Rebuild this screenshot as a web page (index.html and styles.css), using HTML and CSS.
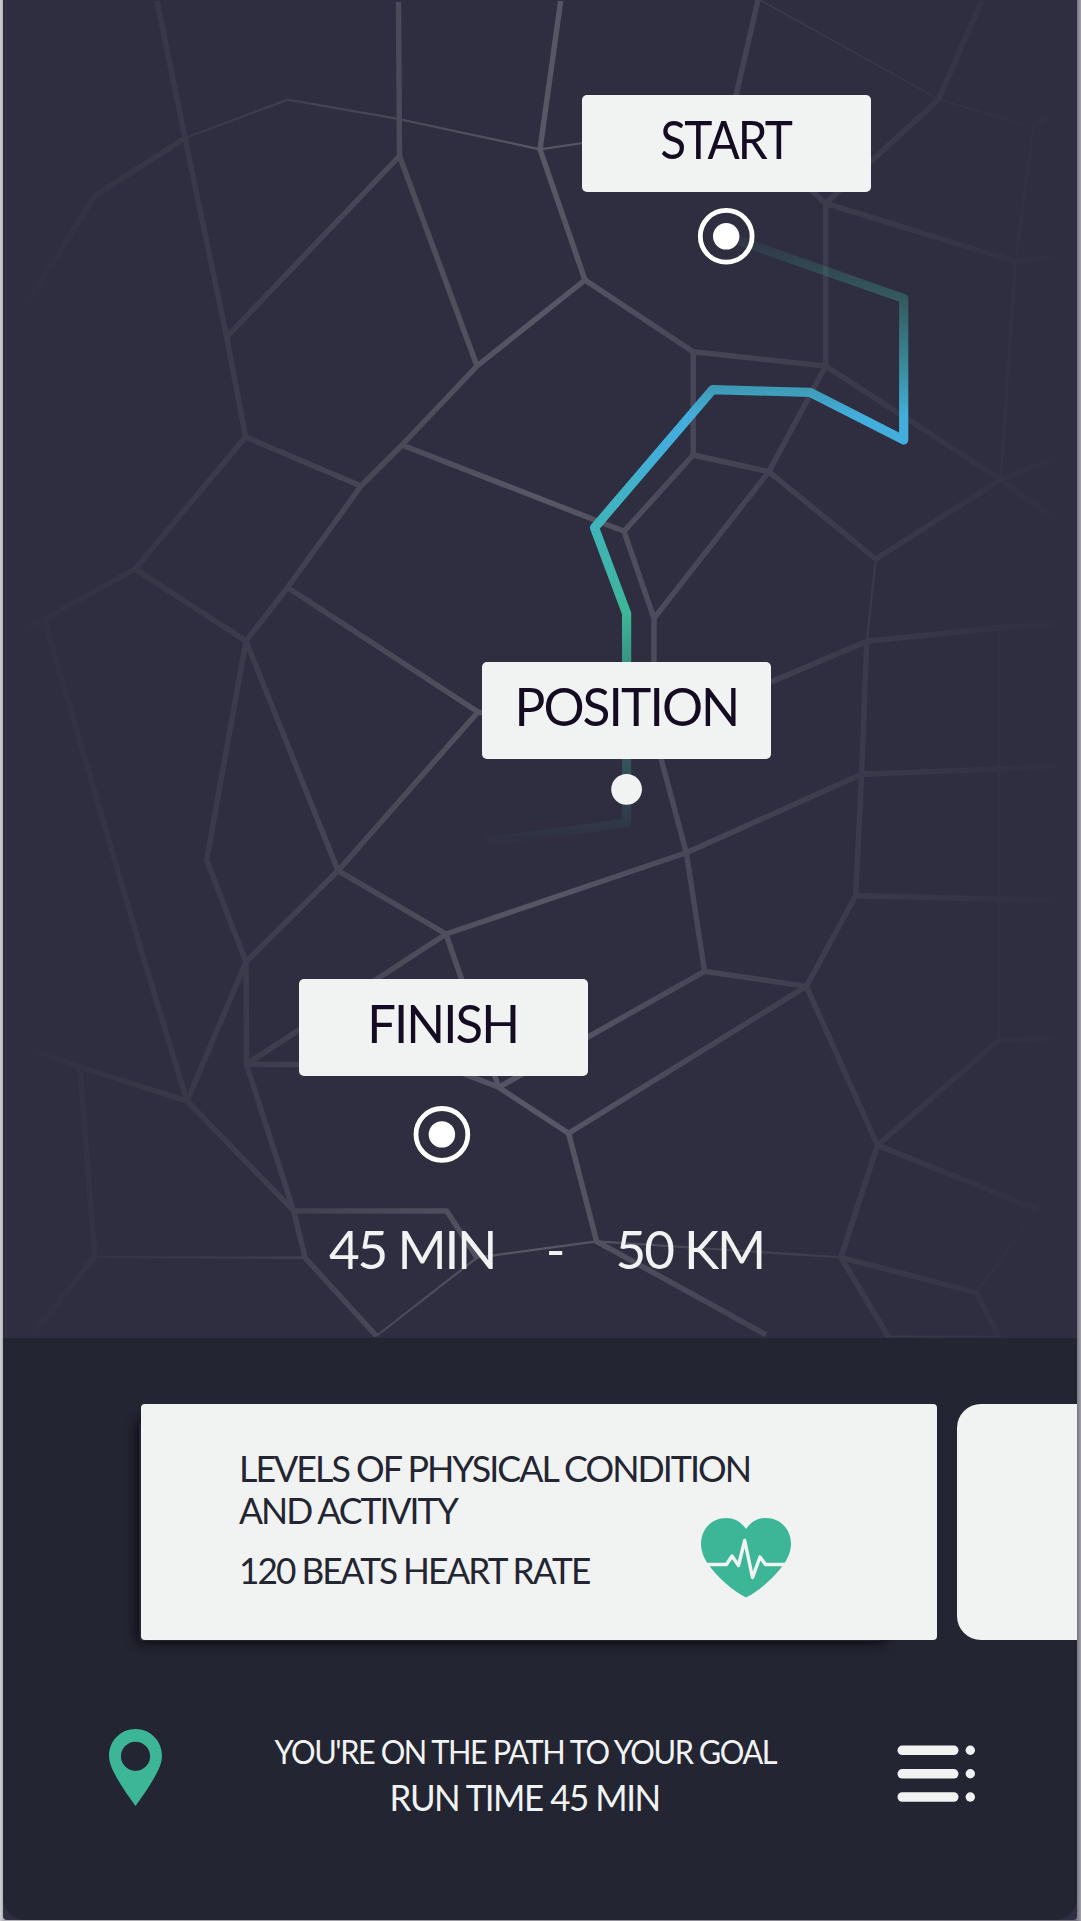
FILE: index.html
```html
<!DOCTYPE html>
<html lang="en">
<head>
<meta charset="utf-8">
<title>Run tracker</title>
<link rel="stylesheet" href="styles.css">
</head>
<body>
<div class="screen">
  <main class="map">
    <svg class="map-canvas" viewBox="3 0 1075 1338" width="1075" height="1338" aria-hidden="true">
      <defs>
        <linearGradient id="road" gradientUnits="userSpaceOnUse" x1="14" y1="0" x2="1070" y2="0">
          <stop offset="0" stop-color="#2f2e40"/>
          <stop offset="0.12" stop-color="#363647"/>
          <stop offset="0.22" stop-color="#3c3b4c"/>
          <stop offset="0.36" stop-color="#494958"/>
          <stop offset="0.5" stop-color="#575766"/>
          <stop offset="0.64" stop-color="#484757"/>
          <stop offset="0.78" stop-color="#3c3b4c"/>
          <stop offset="0.9" stop-color="#353446"/>
          <stop offset="1" stop-color="#2f2e40"/>
        </linearGradient>
        <linearGradient id="route" gradientUnits="userSpaceOnUse" x1="0" y1="236" x2="0" y2="845">
          <stop offset="0" stop-color="#3db698" stop-opacity="0.04"/>
          <stop offset="0.105" stop-color="#3bab98" stop-opacity="0.36"/>
          <stop offset="0.295" stop-color="#43aedb"/>
          <stop offset="0.34" stop-color="#43aedb"/>
          <stop offset="0.48" stop-color="#3fb4b8"/>
          <stop offset="0.62" stop-color="#3db698"/>
          <stop offset="0.86" stop-color="#3aa08c" stop-opacity="0.35"/>
          <stop offset="1" stop-color="#3aa08c" stop-opacity="0"/>
        </linearGradient>
      </defs>
      <g fill="none" stroke="url(#road)" stroke-width="5.400" stroke-linejoin="round">
        <path d="M157 1L185 138L226.600 337L245.600 437L361 486M185 138L94.700 196L21 313"/>
        <path d="M398.500 2L399.500 156L477 366M399.500 156L226.600 337"/>
        <path d="M560.700 1L540 149.300L585 280L477 366L402 445L361 486L287.600 587.500L246 641L338 870.700L446 934L686.300 852.700L861.600 774.300L999 769L1061 766"/>
        <path d="M402 445L624 531.300L654 618.300L653.900 732L686.300 852.700L704.600 971.300L806.400 986.300L568.600 1133.300L596.600 1241.300L766 1334.700"/>
        <path d="M245.600 437L135 569L246 641L206.600 860L246 962L246.500 1064.500L293.500 1210.700L305 1257.700L376.400 1336"/>
        <path d="M135 569L44 619L21 631M44 619L144 960L187 1101L80 1067L21 1046M80 1067L94.700 1256.700L32 1335"/>
        <path d="M287.600 587.500L478 712L338 870.700L246 962L187 1101L293.500 1210.700L446.700 1211L477 1257.700M478 712L520 720"/>
        <path d="M446 934L246 1064.500L440 1064.500L498.700 1087.300L568.600 1133.300M446 934L498.700 1087.300L704.600 971.300"/>
        <path d="M585 280L693.200 351.700L825.700 366L768.800 471.700L654 618.300M693.200 351.700V455L624 531.300M693.200 455L768.800 471.700L875.700 559L1000.700 479.500"/>
        <path d="M758 0L735 100M981.700 1L938.600 99.300L825.700 203.300V366L1000.700 479.500L1061 456M811 190L825.700 203.300L1015.500 261.700L1061 256M1033.400 127.700L1061 105M1000.700 479.500L1061 523"/>
        <path d="M771 682L866.800 641.300L999 627.700L1061 623M866.800 641.300L861.600 774.300L855.700 895.700L806.400 986.300L877.500 1145.300L840.900 1257.300L888.500 1337M855.700 895.700L999 899L1061 901"/>
        <path d="M1061 1039L999 1040L877.500 1145.300L1037 1209.300M840.900 1257.300L976.500 1292.700L999 1337"/>
        <g stroke-width="2.200">
          <path d="M185 138L287.600 99.700L398.500 119L540 149.300L583 143M94.700 1257L305 1257.700M376.400 1336L477 1257.700L596.600 1241.300L840.900 1257.300"/>
          <path d="M1033.400 127.700L1015.500 261.700L1000.700 479.500M875.700 559L866.800 641.300M999 627.700V1040M888 1336.500H999"/>
        </g>
        <path stroke-width="1.200" d="M760 0L938.600 99.300L1033.400 127.700M1060 1107L1037 1209.300L976.500 1292.700"/>
      </g>
      <path fill="none" stroke="url(#route)" stroke-width="9.200" stroke-linejoin="round" d="M726 236L903.700 298.500V440L810.200 392.300L712.500 389.700L594.500 527.700L626.600 613.300V823L486 842"/>
      <g fill="none" stroke="#fff" stroke-width="4.800">
        <circle cx="726.200" cy="236.300" r="25.900"/>
        <circle cx="441.900" cy="1134.400" r="25.900"/>
      </g>
      <g fill="#fff">
        <circle cx="726.200" cy="236.300" r="13.200"/>
        <circle cx="441.900" cy="1134.400" r="13.200"/>
      </g>
      <circle cx="626.600" cy="789.300" r="15.400" fill="#f1f3f2"/>
    </svg>
    <div class="label label-start"><span class="word word-start">START</span></div>
    <div class="label label-position"><span class="word word-position">POSITION</span></div>
    <div class="label label-finish"><span class="word word-finish">FINISH</span></div>
    <div class="stats">
      <span class="stat stat-time">45 MIN</span>
      <span class="stat">-</span>
      <span class="stat stat-distance">50 KM</span>
    </div>
  </main>

  <section class="panel">
    <div class="cards">
      <article class="card card-current">
        <div class="card-text">
          <p class="line line-levels">LEVELS OF PHYSICAL CONDITION</p>
          <p class="line line-activity">AND ACTIVITY</p>
          <p class="line line-rate">120 BEATS HEART RATE</p>
        </div>
        <svg class="heart" viewBox="0 0 90 80" width="90" height="80" aria-hidden="true">
          <path fill="#3db698" d="M45 11C40 4 34 0 25 0C10 0 0 12 0 26C0 33 3 40 7 46C17 60 32 73 45 79.500C58 73 73 60 83 46C87 40 90 33 90 26C90 12 80 0 65 0C56 0 50 4 45 11Z"/>
          <path fill="none" stroke="#f1f3f2" stroke-width="3.400" stroke-linejoin="round" d="M4 46.500H25.500L31 38L37.500 47.500L43.700 22.500L51.500 59.500L59 39L64.500 46.500H86"/>
        </svg>
      </article>
      <article class="card card-next"></article>
    </div>
    <footer class="footer">
      <svg class="pin" viewBox="0 0 53 78" width="53" height="78" aria-hidden="true">
        <path fill="#3db698" fill-rule="evenodd" d="M26.500 0C11.500 0 0 12 0 27C0 33 2.500 39 6 45.500C12 57 19.500 67 26.500 77C33.500 67 41 57 47 45.500C50.500 39 53 33 53 27C53 12 41.500 0 26.500 0ZM26.500 12.700A14.600 14.600 0 1 1 26.500 41.900A14.600 14.600 0 1 1 26.500 12.700Z"/>
      </svg>
      <div class="goal">
        <p class="goal-line goal-path">YOU'RE ON THE PATH TO YOUR GOAL</p>
        <p class="goal-line goal-time">RUN TIME 45 MIN</p>
      </div>
      <svg class="menu" viewBox="0 0 78 58" width="78" height="58" fill="#f1f3f2" aria-hidden="true">
        <rect x="0.500" y="0.500" width="61" height="9.600" rx="4.800"/>
        <rect x="0.500" y="24" width="61" height="9.600" rx="4.800"/>
        <rect x="0.500" y="47.200" width="61" height="9.600" rx="4.800"/>
        <circle cx="73.300" cy="5.300" r="4.700"/>
        <circle cx="73.300" cy="28.800" r="4.700"/>
        <circle cx="73.300" cy="52" r="4.700"/>
      </svg>
    </footer>
  </section>
</div>
</body>
</html>
```

FILE: styles.css
```css
* {
  box-sizing: border-box;
}

body {
  margin: 0;
  height: 1921px;
  overflow: hidden;
  font-family: Lato, "Liberation Sans", sans-serif;
  background: linear-gradient(90deg, #d0d1d1 0, #b4b4b8 3px, #77757f 1077px, #a19fa8 1081px);
}

p {
  margin: 0;
}

.screen {
  width: 1074px;
  height: 1920px;
  margin-left: 3px;
  overflow: hidden;
  display: flex;
  flex-direction: column;
  background: #2f2e40;
  border-radius: 0 0 4px 4px;
}

.map {
  position: relative;
  flex: none;
  height: 1338px;
}

.map-canvas {
  display: block;
}

.label {
  position: absolute;
  width: 289px;
  height: 96.500px;
  padding-bottom: 9px;
  display: flex;
  align-items: center;
  justify-content: center;
  border-radius: 5px;
  background: #f1f3f2;
  color: #150b22;
}

.label-start {
  left: 578.500px;
  top: 95.300px;
}

.label-position {
  left: 479px;
  top: 662px;
}

.label-finish {
  left: 295.500px;
  top: 979px;
}

.word,
.stat {
  font-size: 53px;
  line-height: 64px;
  white-space: nowrap;
}

.word {
  letter-spacing: -2px;
}

.word-start {
  transform: scaleX(0.9);
}

.word-position {
  transform: scaleX(0.97);
}

.word-finish {
  transform: scaleX(0.96);
}

.stats {
  position: absolute;
  left: 326px;
  top: 1217px;
  width: 435px;
  display: flex;
  justify-content: space-between;
  color: #f1f3f2;
}

.stat-time,
.stat-distance {
  letter-spacing: -2.200px;
}

.panel {
  flex: 1;
  padding-top: 66px;
  border-radius: 0 0 22px 22px;
  background: #242532;
}

.cards {
  position: relative;
  z-index: 0;
  display: flex;
  gap: 20px;
  padding-left: 138px;
}

.card {
  flex: none;
  width: 796px;
  height: 236px;
  padding: 43px 0 0 98px;
  display: flex;
  border-radius: 4px;
  background: #f1f3f2;
}

.card-current {
  position: relative;
}

/* Shadow falls to the lower left and stops short of the card's right edge */
.card-current::before {
  content: "";
  position: absolute;
  z-index: -1;
  inset: 18px 54px -1px -2px;
  border-radius: 4px;
  box-shadow: 0 0 12px 2px rgba(8, 6, 12, 0.9);
}

.card-next {
  border-radius: 24px;
}

.card-text {
  width: 462px;
  color: #242532;
}

.line {
  font-size: 36.300px;
  line-height: 42px;
  white-space: nowrap;
  letter-spacing: -2px;
  transform-origin: left;
}

.line-levels {
  transform: scaleX(0.986);
}

.line-activity {
  transform: scaleX(0.979);
}

.line-rate {
  margin-top: 18px;
  transform: scaleX(0.97);
}

.heart {
  margin-top: 71px;
}

.footer {
  display: flex;
  align-items: flex-start;
  padding: 89px 102px 0 106px;
}

.goal {
  flex: 1;
  padding: 1px 9px 0 0;
  display: flex;
  flex-direction: column;
  align-items: center;
  color: #f1f3f2;
}

.goal-line {
  white-space: nowrap;
  letter-spacing: -1.500px;
  transform: scaleX(0.96);
}

.goal-path {
  font-size: 32px;
  line-height: 44px;
}

.goal-time {
  font-size: 36.300px;
  line-height: 46px;
}

.menu {
  margin-top: 16px;
}
```
